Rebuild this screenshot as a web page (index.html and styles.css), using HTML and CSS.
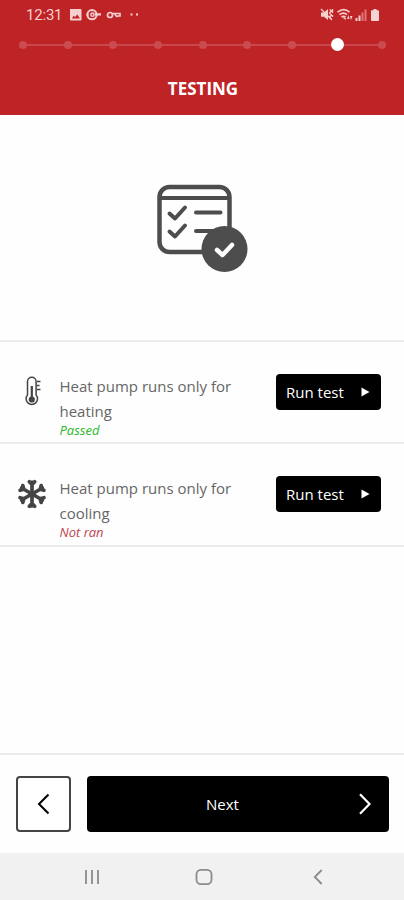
FILE: index.html
```html
<!DOCTYPE html>
<html lang="en">
<head>
<meta charset="utf-8">
<meta name="viewport" content="width=device-width, initial-scale=1">
<title>Testing</title>
<link rel="stylesheet" href="styles.css">
</head>
<body>
<div class="screen">
  <header class="header">
    <div class="status">
      <span class="time">12:31</span>
      <svg class="status-left" width="76" height="16" viewBox="0 0 76 16" fill="none" stroke="#f6cfcf">
        <path fill="#f6cfcf" stroke="none" fill-rule="evenodd" d="M2 2h10.500q1 0 1 1v9.500q0 1-1 1H3q-1 0-1-1zM4 11.500h8L9.300 7.500 7 10 5.500 8.700z"/>
        <circle cx="24" cy="7.700" r="4.600" stroke-width="2"/>
        <circle cx="24.500" cy="7.700" r="1.600" stroke-width="1.500"/>
        <path stroke-width="2.200" d="M27 7.300h6M18.500 7.700h2"/>
        <circle cx="42" cy="8" r="2.500" stroke-width="1.700"/>
        <path stroke-width="1.600" d="M44.500 6.500h7.500v2.500h-2M46.500 6.500q2 4.500 4 2"/>
        <path stroke-width="2" d="M62.500 7.500h2M68 7.500h2"/>
      </svg>
      <svg class="status-right" width="62" height="16" viewBox="0 0 62 16" fill="none" stroke="#f6cfcf">
        <path fill="#f6cfcf" stroke="none" d="M1 5.500h3L8 2v11L4 9.800H1z"/>
        <path stroke-width="1.300" d="M1 2l11 11M9.500 2.500l2 1.500-2 2 2 2-2 2 2 2M12.500 2v4M12.500 8v2"/>
        <path stroke-width="1.700" d="M17.500 5.200q6.500-5 12 0M19.500 7.700q4-3.200 7.500 0M21.500 10q2-1.500 4 0"/>
        <path fill="#f6cfcf" stroke="none" d="M22 10.500h3.500L26 13zM27 12l1.500-4 1 4zM30 9l1 4 1.500-4z"/>
        <path stroke-width="2" d="M36.500 11v3M39.500 8.500V14"/>
        <path stroke="#dd7478" stroke-width="2" d="M42.500 5.500V14M45.500 2.500V14"/>
        <path fill="#f6d3d3" stroke="none" d="M53.500 2h3v1.200h1.500q1 0 1 1V13q0 1-1 1H52q-1 0-1-1V4.200q0-1 1-1h1.500z"/>
      </svg>
    </div>
    <div class="steps">
      <i class="dot"></i><i class="dot"></i><i class="dot"></i><i class="dot"></i><i class="dot"></i><i class="dot"></i><i class="dot"></i><i class="dot current"></i><i class="dot"></i>
    </div>
    <h1 class="title">TESTING</h1>
  </header>

  <section class="hero">
    <svg width="94" height="90" viewBox="0 0 94 90" fill="none" stroke="#4d4d4d" stroke-linecap="round" stroke-linejoin="round">
      <rect x="4.500" y="3" width="70" height="65" rx="10" stroke-width="4.500"/>
      <path stroke-width="4" stroke-linecap="butt" d="M4 14h71"/>
      <path stroke-width="4" d="M14.500 29.500l5.500 5 10-11M14.500 47.500l5.500 5 10-11M41 28.500h24.500M41 47h24"/>
      <circle cx="69.500" cy="65" r="23" fill="#4d4d4d" stroke="none"/>
      <path stroke="#fff" stroke-width="4.500" d="M62 66l5.500 5 9.500-10"/>
    </svg>
  </section>

  <main class="tests">
    <article class="test">
      <svg class="icon" width="32" height="32" viewBox="0 0 32 32" fill="none" stroke="#444">
        <path stroke-width="1.500" d="M11.500 19V5.500a4.300 4.300 0 0 1 8.600 0V19a5.700 5.700 0 1 1-8.600 0z"/>
        <path stroke-width="2.200" d="M15.800 10v13"/>
        <circle cx="15.800" cy="23.500" r="3.100" fill="#444" stroke="none"/>
        <path stroke-width="1.300" d="M21 5.500h3.500M21 9.500h2.500M21 13.500h3.500"/>
      </svg>
      <div class="info">
        <p class="name">Heat pump runs only for heating</p>
        <p class="result passed">Passed</p>
      </div>
      <button class="run">Run test<svg width="10" height="10" viewBox="0 0 10 10" fill="#fff"><path d="M1.500 .5v9L9.500 5z"/></svg></button>
    </article>
    <article class="test">
      <svg class="icon" width="32" height="32" viewBox="0 0 32 32" fill="none" stroke="#444" stroke-width="3.700" stroke-linecap="round" stroke-linejoin="round">
        <g id="arm"><path d="M16 16V4M13.300 3.800L16 6.500l2.700-2.700"/></g>
        <use href="#arm" transform="rotate(60 16 16)"/>
        <use href="#arm" transform="rotate(120 16 16)"/>
        <use href="#arm" transform="rotate(180 16 16)"/>
        <use href="#arm" transform="rotate(240 16 16)"/>
        <use href="#arm" transform="rotate(300 16 16)"/>
      </svg>
      <div class="info">
        <p class="name">Heat pump runs only for cooling</p>
        <p class="result pending">Not ran</p>
      </div>
      <button class="run">Run test<svg width="10" height="10" viewBox="0 0 10 10" fill="#fff"><path d="M1.500 .5v9L9.500 5z"/></svg></button>
    </article>
  </main>

  <footer class="actions">
    <button class="back" aria-label="Back"><svg width="14" height="22" viewBox="0 0 14 22" fill="none" stroke="#000" stroke-width="2"><path d="M11.500 1.500L2 11l9.500 9.500"/></svg></button>
    <button class="next"><span>Next</span><svg width="14" height="22" viewBox="0 0 14 22" fill="none" stroke="#fff" stroke-width="2.200"><path d="M2 1.200L11.500 11 2 20.800"/></svg></button>
  </footer>

  <nav class="system">
    <svg width="16" height="16" viewBox="0 0 16 16" fill="none" stroke="#8b8b8b" stroke-width="1.800"><path d="M2 1v14M8 1v14M14 1v14"/></svg>
    <svg class="home" width="18" height="18" viewBox="0 0 18 18" fill="none" stroke="#8b8b8b" stroke-width="1.800"><rect x="1.500" y="1.800" width="15" height="14.400" rx="4.500"/></svg>
    <svg width="10" height="16" viewBox="0 0 10 16" fill="none" stroke="#8b8b8b" stroke-width="1.800"><path d="M8.700 1L1.800 8l6.900 7"/></svg>
  </nav>
</div>
</body>
</html>
```
FILE: styles.css
```css
* { box-sizing: border-box; }

body {
  margin: 0;
  background: #fff;
  font-family: "Open Sans", "Noto Sans", sans-serif;
}

h1, p { margin: 0; }
svg { display: block; flex: none; }

.screen {
  display: flex;
  flex-direction: column;
  width: 404px;
  height: 900px;
  background: #fefefe;
}

.header {
  height: 115px;
  background: #be2326;
}

.status {
  display: flex;
  align-items: center;
  height: 30px;
  padding: 0 22px 0 26px;
  color: #f6cfcf;
}

.time {
  width: 42px;
  font: 400 15px/30px Roboto, sans-serif;
  letter-spacing: -0.2px;
}

.status-right { margin-left: auto; }

.steps {
  display: flex;
  align-items: center;
  justify-content: space-between;
  height: 29px;
  padding: 0 18px 0 19px;
  background: linear-gradient(#c9474a, #c9474a) 22px 14px / 361px 2px no-repeat;
}

.dot {
  width: 8px;
  height: 8px;
  border-radius: 50%;
  background: #cb4c50;
}

.current {
  width: 13px;
  height: 13px;
  margin: 0 -2.500px;
  background: #fff;
}

.title {
  padding: 17px 0 0 2px;
  color: #fff;
  font-size: 17px;
  font-weight: 700;
  line-height: 25px;
  text-align: center;
}

.hero {
  display: flex;
  justify-content: center;
  height: 225px;
  padding-top: 69px;
}

.tests {
  flex: 1;
  border-top: 2px solid #ebebeb;
}

.test {
  display: flex;
  align-items: flex-start;
  height: 102px;
  padding: 32px 23px 0 16px;
  border-bottom: 2px solid #ebebeb;
}

.test + .test { height: 103px; }

.icon { margin-top: 2px; }

.info {
  width: 200px;
  margin-left: 11.500px;
}

.name {
  width: 185px;
  color: #666;
  font-size: 15px;
  line-height: 24.500px;
}

.result {
  font-size: 13px;
  font-style: italic;
  line-height: 14px;
}

.passed { color: #29b829; }
.pending { color: #bd4552; }

button {
  padding: 0;
  border: 0;
  font: inherit;
}

.run {
  display: flex;
  align-items: center;
  justify-content: space-between;
  width: 105px;
  height: 36px;
  margin-left: auto;
  padding: 0 11px 0 10px;
  border-radius: 4px;
  background: #000;
  color: #fff;
  font-size: 15px;
}

.actions {
  display: flex;
  gap: 16px;
  height: 100px;
  padding: 21px 15px 0 16px;
  border-top: 2px solid #ebebeb;
}

.back {
  display: flex;
  align-items: center;
  justify-content: center;
  width: 55px;
  height: 56px;
  border: 2px solid #444;
  border-radius: 4px;
  background: #fff;
}

.next {
  display: flex;
  align-items: center;
  flex: 1;
  height: 56px;
  padding: 0 17px 0 0;
  border-radius: 4px;
  background: #000;
  color: #fff;
  font-size: 15px;
}

.next span {
  flex: 1;
  text-align: center;
}

.system {
  display: flex;
  align-items: center;
  justify-content: space-between;
  height: 47px;
  padding: 1px 81px 0 84px;
  background: #f1f1f1;
}

.home { margin: 0 5px 0 0; }
```
